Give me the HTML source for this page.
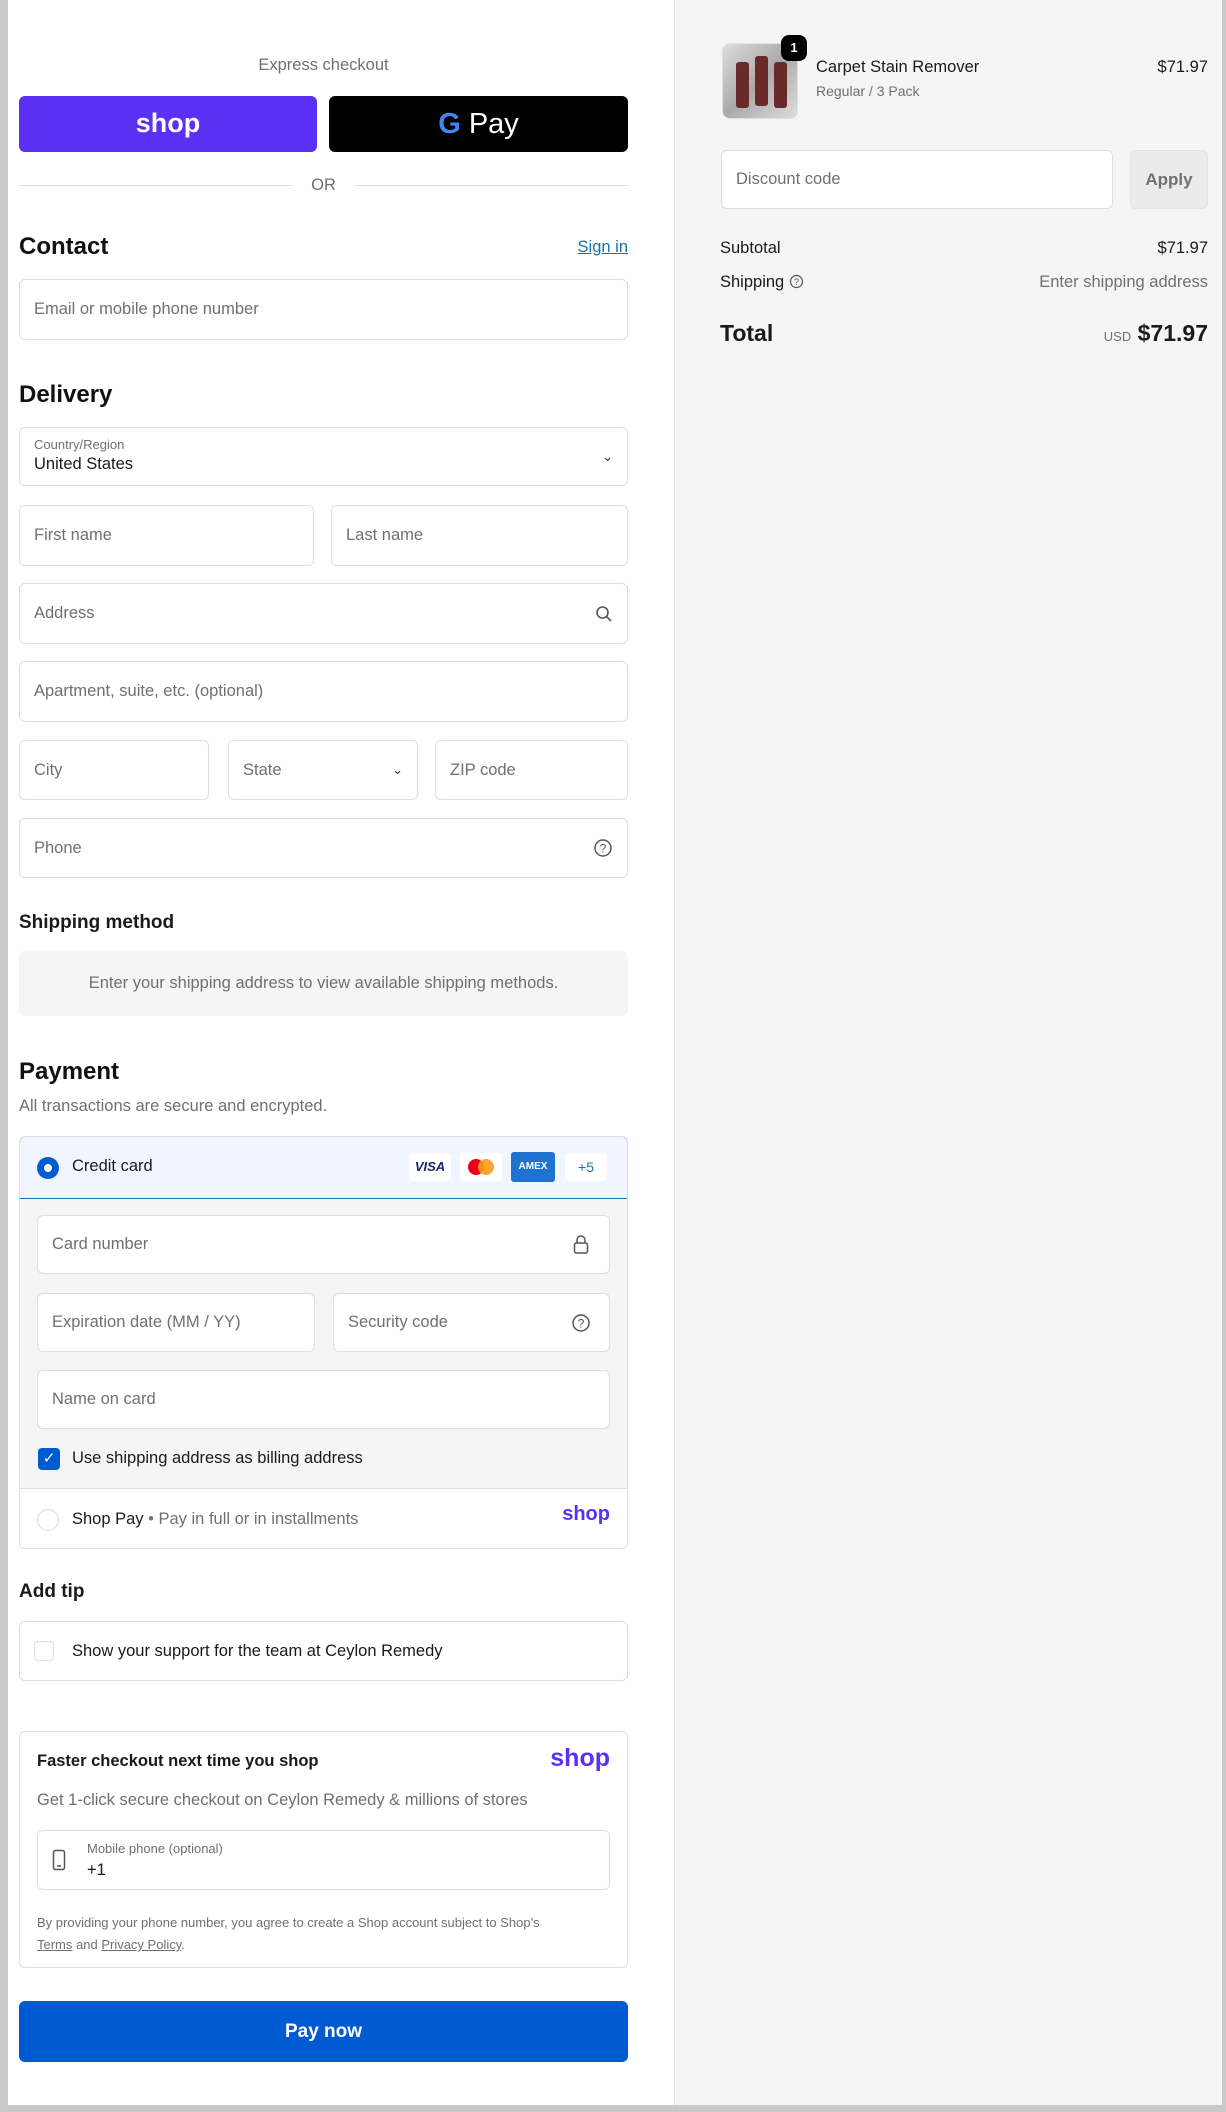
<!DOCTYPE html>
<html><head><meta charset="utf-8"><style>
*{box-sizing:border-box;margin:0;padding:0}
body{width:1226px;height:2112px;position:relative;background:#c9c9c9;font-family:"Liberation Sans",sans-serif;color:#1a1a1a;overflow:hidden}
.a{position:absolute}
#L{left:8px;top:0;width:666px;height:2105px;background:#fff}
#R{left:674px;top:0;width:548px;height:2105px;background:#f5f5f5;border-left:1px solid #e3e3e3}
.inp{position:absolute;background:#fff;border:1px solid #dedede;border-radius:6px;font-size:16.5px;color:#707070;padding-left:14px;display:flex;align-items:center}
.h{position:absolute;font-size:24px;font-weight:bold;color:#111}
.t{position:absolute;font-size:16.5px}
.ic{position:absolute;right:14px;top:50%;transform:translateY(-50%)}
</style></head><body>
<div id="L" class="a"></div>
<div id="R" class="a"></div>

<div class="t" style="left:19px;width:609px;top:56px;text-align:center;color:#707070">Express checkout</div>
<div class="a" style="left:19px;top:96px;width:298px;height:56px;background:#5a31f4;border-radius:6px;color:#fff;font-weight:bold;font-size:27px;text-align:center;line-height:54px">shop</div>
<div class="a" style="left:329px;top:96px;width:299px;height:56px;background:#000;border-radius:6px;color:#fff;font-size:29px;text-align:center;line-height:56px"><span style="font-weight:bold;color:#4285f4">G</span> Pay</div>
<div class="a" style="left:19px;top:185px;width:273px;height:1px;background:#dedede"></div>
<div class="a" style="left:355px;top:185px;width:273px;height:1px;background:#dedede"></div>
<div class="t" style="left:292px;width:63px;top:176px;text-align:center;color:#707070">OR</div>

<div class="h" style="left:19px;top:233px">Contact</div>
<div class="t" style="right:598px;top:238px;color:#1773b0;text-decoration:underline">Sign in</div>
<div class="inp" style="left:19px;top:279px;width:609px;height:61px">Email or mobile phone number</div>

<div class="h" style="left:19px;top:381px">Delivery</div>
<div class="inp" style="left:19px;top:427px;width:609px;height:59px;display:block;padding-top:9px"><div style="font-size:13px;color:#707070">Country/Region</div><div style="font-size:16.5px;color:#1a1a1a;margin-top:3px">United States</div><span class="ic" style="font-size:13px;color:#333">&#8964;</span></div>
<div class="inp" style="left:19px;top:505px;width:295px;height:61px">First name</div>
<div class="inp" style="left:331px;top:505px;width:297px;height:61px">Last name</div>
<div class="inp" style="left:19px;top:583px;width:609px;height:61px">Address<svg class="ic" width="18" height="18" viewBox="0 0 18 18"><circle cx="7.5" cy="7.5" r="5.5" fill="none" stroke="#555" stroke-width="1.6"/><path d="M11.5 11.5L16 16" stroke="#555" stroke-width="1.6"/></svg></div>
<div class="inp" style="left:19px;top:661px;width:609px;height:61px">Apartment, suite, etc. (optional)</div>
<div class="inp" style="left:19px;top:740px;width:190px;height:60px">City</div>
<div class="inp" style="left:228px;top:740px;width:190px;height:60px">State<span class="ic" style="font-size:13px;color:#333">&#8964;</span></div>
<div class="inp" style="left:435px;top:740px;width:193px;height:60px">ZIP code</div>
<div class="inp" style="left:19px;top:818px;width:609px;height:60px">Phone<svg class="ic" width="20" height="20" viewBox="0 0 20 20"><circle cx="10" cy="10" r="8" fill="none" stroke="#555" stroke-width="1.5"/><text x="10" y="14.5" font-size="12" text-anchor="middle" fill="#555" font-family="Liberation Sans">?</text></svg></div>

<div class="t" style="left:19px;top:912px;font-weight:bold;font-size:19px">Shipping method</div>
<div class="a" style="left:19px;top:951px;width:609px;height:65px;background:#f5f5f5;border-radius:6px;color:#707070;font-size:16.5px;text-align:center;line-height:65px">Enter your shipping address to view available shipping methods.</div>

<div class="h" style="left:19px;top:1058px">Payment</div>
<div class="t" style="left:19px;top:1097px;color:#707070">All transactions are secure and encrypted.</div>
<div class="a" style="left:19px;top:1136px;width:609px;height:413px;border:1px solid #dedede;border-radius:6px;background:#f5f5f5;overflow:hidden">
 <div class="a" style="left:-1px;top:-1px;width:609px;height:63px;background:#f0f5ff;border:1px solid #1773b0;border-radius:6px 6px 0 0"></div>
 <div class="a" style="left:17px;top:20px;width:22px;height:22px;border-radius:50%;background:#005bd3"><div class="a" style="left:7px;top:7px;width:8px;height:8px;border-radius:50%;background:#fff"></div></div>
 <div class="t" style="left:52px;top:20px">Credit card</div>
 <div class="a" style="left:389px;top:16px;width:42px;height:28px;background:#fff;border-radius:3px;font:italic bold 13px 'Liberation Sans';color:#1a1f71;text-align:center;line-height:28px">VISA</div>
 <div class="a" style="left:440px;top:16px;width:42px;height:28px;background:#fff;border-radius:3px"><div class="a" style="left:8px;top:6px;width:16px;height:16px;border-radius:50%;background:#eb001b"></div><div class="a" style="left:18px;top:6px;width:16px;height:16px;border-radius:50%;background:#f79e1b;opacity:.9"></div></div>
 <div class="a" style="left:491px;top:15px;width:44px;height:30px;background:#1f72cd;border-radius:3px;color:#fff;font:bold 10px 'Liberation Sans';text-align:center;line-height:30px">AMEX</div>
 <div class="a" style="left:545px;top:16px;width:42px;height:28px;background:#fff;border-radius:3px;color:#1773b0;font-size:14px;text-align:center;line-height:28px">+5</div>
 <div class="inp" style="left:17px;top:78px;width:573px;height:59px">Card number<svg class="ic" style="right:20px" width="16" height="20" viewBox="0 0 16 20"><path d="M4 8V5a4 4 0 0 1 8 0v3" fill="none" stroke="#555" stroke-width="1.5"/><rect x="1.5" y="8" width="13" height="10" rx="2" fill="none" stroke="#555" stroke-width="1.5"/></svg></div>
 <div class="inp" style="left:17px;top:156px;width:278px;height:59px">Expiration date (MM / YY)</div>
 <div class="inp" style="left:313px;top:156px;width:277px;height:59px">Security code<svg class="ic" style="right:18px" width="20" height="20" viewBox="0 0 20 20"><circle cx="10" cy="10" r="8" fill="none" stroke="#555" stroke-width="1.5"/><text x="10" y="14.5" font-size="12" text-anchor="middle" fill="#555" font-family="Liberation Sans">?</text></svg></div>
 <div class="inp" style="left:17px;top:233px;width:573px;height:59px">Name on card</div>
 <div class="a" style="left:18px;top:311px;width:22px;height:22px;border-radius:4px;background:#005bd3;color:#fff;font-size:15px;text-align:center;line-height:22px">&#10003;</div>
 <div class="t" style="left:52px;top:312px">Use shipping address as billing address</div>
 <div class="a" style="left:0;top:351px;width:609px;height:62px;background:#fff;border-top:1px solid #dedede"></div>
 <div class="a" style="left:17px;top:372px;width:22px;height:22px;border-radius:50%;border:1px solid #dedede;background:#fff"></div>
 <div class="t" style="left:52px;top:373px">Shop Pay <span style="color:#707070">&bull; Pay in full or in installments</span></div>
 <div class="t" style="right:17px;top:366px;color:#5a31f4;font-weight:bold;font-size:20px">shop</div>
</div>

<div class="t" style="left:19px;top:1581px;font-weight:bold;font-size:19px">Add tip</div>
<div class="inp" style="left:19px;top:1621px;width:609px;height:60px;color:#1a1a1a"><span style="display:inline-block;width:20px;height:20px;border:1px solid #dedede;border-radius:4px;margin-right:18px"></span>Show your support for the team at Ceylon Remedy</div>

<div class="a" style="left:19px;top:1731px;width:609px;height:237px;border:1px solid #dedede;border-radius:6px;background:#fff">
 <div class="t" style="left:17px;top:20px;font-weight:bold;font-size:16.5px">Faster checkout next time you shop</div>
 <div class="t" style="right:17px;top:12px;color:#5a31f4;font-weight:bold;font-size:25px">shop</div>
 <div class="t" style="left:17px;top:59px;color:#707070">Get 1-click secure checkout on Ceylon Remedy &amp; millions of stores</div>
 <div class="a" style="left:17px;top:98px;width:573px;height:60px;border:1px solid #dedede;border-radius:6px">
  <svg class="a" style="left:14px;top:18px" width="14" height="22" viewBox="0 0 14 22"><rect x="1.5" y="1.5" width="11" height="19" rx="2" fill="none" stroke="#555" stroke-width="1.5"/><path d="M5 17h4" stroke="#555" stroke-width="1.5"/></svg>
  <div class="t" style="left:49px;top:10px;font-size:13px;color:#707070">Mobile phone (optional)</div>
  <div class="t" style="left:49px;top:30px">+1</div>
 </div>
 <div class="t" style="left:17px;top:180px;font-size:13px;color:#707070;line-height:22px;width:590px">By providing your phone number, you agree to create a Shop account subject to Shop's<br><u>Terms</u> and <u>Privacy Policy</u>.</div>
</div>

<div class="a" style="left:19px;top:2001px;width:609px;height:61px;background:#005bd3;border-radius:6px;color:#fff;font-size:19px;font-weight:bold;text-align:center;line-height:61px">Pay now</div>

<!-- right -->
<div class="a" style="left:722px;top:43px;width:76px;height:76px;border-radius:8px;background:linear-gradient(135deg,#ddd,#aaa 50%,#ddd);border:1px solid #e0e0e0">
 <div class="a" style="left:13px;top:18px;width:13px;height:46px;background:#6b2a2a;border-radius:3px"></div>
 <div class="a" style="left:32px;top:12px;width:13px;height:50px;background:#6b2a2a;border-radius:3px"></div>
 <div class="a" style="left:51px;top:18px;width:13px;height:46px;background:#6b2a2a;border-radius:3px"></div>
</div>
<div class="a" style="left:781px;top:35px;width:26px;height:26px;border-radius:8px;background:#000;color:#fff;font-size:13px;font-weight:bold;text-align:center;line-height:26px">1</div>
<div class="t" style="left:816px;top:58px">Carpet Stain Remover</div>
<div class="t" style="left:816px;top:83px;font-size:14px;color:#707070">Regular / 3 Pack</div>
<div class="t" style="right:18px;top:58px">$71.97</div>
<div class="inp" style="left:721px;top:150px;width:392px;height:59px">Discount code</div>
<div class="a" style="left:1130px;top:150px;width:78px;height:59px;background:#ebebeb;border:1px solid #e3e3e3;border-radius:6px;color:#707070;font-size:17px;font-weight:bold;text-align:center;line-height:57px">Apply</div>
<div class="t" style="left:720px;top:239px">Subtotal</div>
<div class="t" style="right:18px;top:239px">$71.97</div>
<div class="t" style="left:720px;top:273px">Shipping <svg width="15" height="15" viewBox="0 0 20 20" style="vertical-align:-2px"><circle cx="10" cy="10" r="8" fill="none" stroke="#555" stroke-width="1.6"/><text x="10" y="14.5" font-size="12" text-anchor="middle" fill="#555" font-family="Liberation Sans">?</text></svg></div>
<div class="t" style="right:18px;top:273px;color:#707070">Enter shipping address</div>
<div class="t" style="left:720px;top:320px;font-size:23px;font-weight:bold">Total</div>
<div class="t" style="right:18px;top:320px;font-size:23px;font-weight:bold"><span style="font-size:13px;font-weight:normal;color:#707070">USD</span> $71.97</div>
</body></html>
